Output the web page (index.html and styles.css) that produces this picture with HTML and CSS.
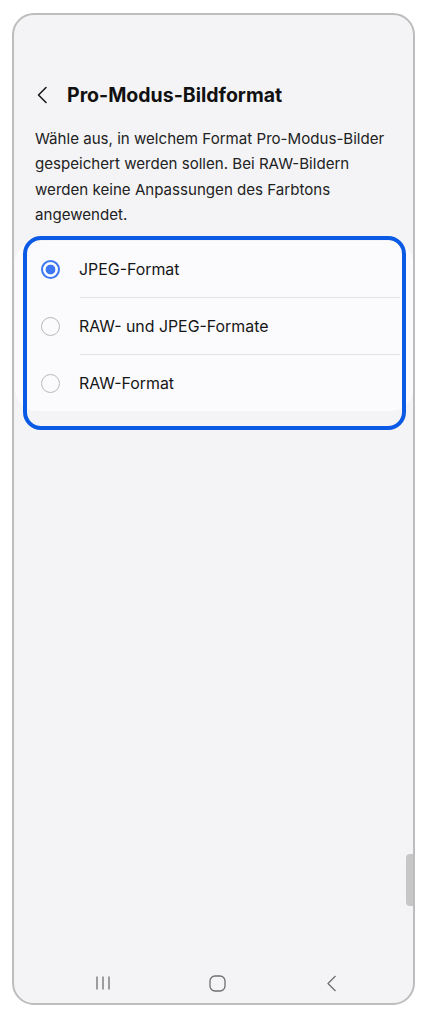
FILE: index.html
```html
<!DOCTYPE html>
<html lang="de">
<head>
<meta charset="utf-8">
<title>Pro-Modus-Bildformat</title>
<link rel="stylesheet" href="styles.css">
</head>
<body>
<div class="phone">
  <header class="header">
    <svg class="back" width="12" height="18" viewBox="0 0 12 18"><path d="M10 1.5 L2.5 9 L10 16.5" fill="none" stroke="#1c1c1c" stroke-width="1.6" stroke-linecap="round" stroke-linejoin="round"/></svg>
    <h1 class="title">Pro-Modus-Bildformat</h1>
  </header>
  <p class="desc">Wähle aus, in welchem Format Pro-Modus-Bilder gespeichert werden sollen. Bei RAW-Bildern werden keine Anpassungen des Farbtons angewendet.</p>
  <div class="card">
    <div class="row">
      <span class="radio checked"></span>
      <span class="label">JPEG-Format</span>
    </div>
    <div class="divider"></div>
    <div class="row">
      <span class="radio"></span>
      <span class="label">RAW- und JPEG-Formate</span>
    </div>
    <div class="divider"></div>
    <div class="row">
      <span class="radio"></span>
      <span class="label">RAW-Format</span>
    </div>
    <div class="highlight"></div>
  </div>
  <div class="scrollbar"></div>
  <nav class="navbar">
    <div class="navcell">
      <svg width="16" height="16" viewBox="0 0 16 16"><path d="M2 1.5v13M8 1.5v13M14 1.5v13" stroke="#6f6f6f" stroke-width="1.3" fill="none"/></svg>
    </div>
    <div class="navcell">
      <svg width="17" height="17" viewBox="0 0 17 17"><rect x="1" y="1" width="15" height="15" rx="5" fill="none" stroke="#6f6f6f" stroke-width="1.3"/></svg>
    </div>
    <div class="navcell">
      <svg width="11" height="17" viewBox="0 0 11 17"><path d="M9.5 1 L2 8.5 L9.5 16" fill="none" stroke="#6f6f6f" stroke-width="1.3" stroke-linejoin="round"/></svg>
    </div>
  </nav>
</div>
</body>
</html>
```

FILE: styles.css
```css
* { box-sizing: border-box; }
html, body { margin: 0; padding: 0; background: #ffffff; }
body { font-family: Inter, Roboto, "Liberation Sans", sans-serif; color: #1f1f1f; }

.phone {
  position: relative;
  margin: 13px 0 0 12px;
  width: 403px;
  height: 992px;
  border: 2px solid #bdbdbd;
  border-radius: 22px;
  background: #f4f4f6;
  display: flex;
  flex-direction: column;
  overflow: hidden;
}

.header {
  display: flex;
  align-items: center;
  gap: 19px;
  padding: 66px 0 0 22px;
  height: 94px;
}
.back { flex: none; }
.title {
  margin: 0;
  font-size: 19.5px;
  line-height: 28px;
  font-weight: 700;
  color: #111111;
}

.desc {
  margin: 17px 18px 0 21px;
  font-size: 15.1px;
  line-height: 25.3px;
  color: #222222;
}

.card {
  position: relative;
  margin: 14px 0 0 1px;
  width: 398px;
  background: #fbfbfd;
  border-radius: 22px;
}
.row {
  display: flex;
  align-items: center;
  gap: 19px;
  height: 56px;
  padding-left: 26px;
}
.radio {
  flex: none;
  width: 19px;
  height: 19px;
  border-radius: 50%;
  border: 1.5px solid #b9b9b9;
  background: #fbfbfd;
}
.radio.checked {
  border: 2px solid #3d78f2;
  background: radial-gradient(circle, #3d78f2 0 4.6px, #fbfbfd 5.2px);
}
.label {
  font-size: 15.9px;
  color: #161616;
}
.divider {
  height: 1px;
  background: #e3e3e6;
  margin: 0 13px 0 65px;
}
.highlight {
  position: absolute;
  left: 8px;
  top: -5px;
  width: 383px;
  height: 194px;
  border: 4px solid #0a5ae6;
  border-radius: 18px;
  pointer-events: none;
}

.scrollbar {
  position: absolute;
  right: 0;
  top: 839px;
  width: 7px;
  height: 52px;
  background: #c6c6c6;
  border-radius: 4px 0 0 4px;
}

.navbar {
  margin-top: auto;
  display: flex;
  height: 40px;
  padding-left: 32px;
  align-items: center;
}
.navcell {
  width: 114px;
  display: flex;
  justify-content: center;
  align-items: center;
}
```
